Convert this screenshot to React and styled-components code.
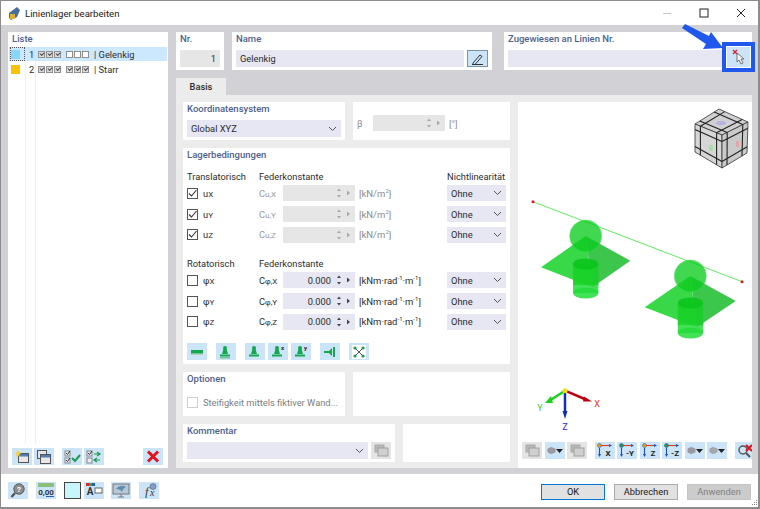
import React from "react"
import styled, { createGlobalStyle } from "styled-components"

const GlobalStyle = createGlobalStyle`
  html, body { margin: 0; padding: 0; background: #fff; }
  body { font-family: Roboto, "Open Sans", "Liberation Sans", sans-serif; font-size: 9.3px; color: #2c2c2c; }
  * { box-sizing: border-box; }
`

const Window = styled.div`
  position: relative;
  width: 760px;
  height: 509px;
  display: flex;
  flex-direction: column;
  background: #fff;
  border: solid #8c8c8c;
  border-width: 1px 2px 2px 1px;
  overflow: hidden;
`

const TitleBar = styled.div`
  height: 24px;
  flex: none;
  display: flex;
  align-items: center;
  padding-left: 6px;
  gap: 4px;
  font-size: 9.6px;
  color: #1a1a1a;
`

const WindowControls = styled.div`
  margin-left: auto;
  display: flex;
  align-items: center;
  gap: 27px;
  padding-right: 12px;
`

const Main = styled.div`
  flex: 1;
  display: flex;
  gap: 8px;
  min-height: 0;
  padding: 7px 6px 6px 7px;
  background: #d2d2d6;
`

const Panel = styled.div`
  background: #fff;
  padding: 0 4px;
  min-width: 0;
  width: ${(p) => (p.$w ? `${p.$w}px` : "auto")};
  height: ${(p) => (p.$h ? `${p.$h}px` : "auto")};
  flex: ${(p) => (p.$w || p.$fixed ? "none" : 1)};
  margin-left: ${(p) => p.$ml || 0}px;
`

const PanelTitle = styled.div`
  font-weight: 500;
  font-size: 9.5px;
  height: 18px;
  line-height: 14px;
  color: #4d5f8f;
  white-space: nowrap;
`

const ListPanel = styled.div`
  width: 160px;
  flex: none;
  background: #fff;
  display: flex;
  flex-direction: column;
`

const ListTitle = styled(PanelTitle)`
  padding-left: 4px;
  height: 15px;
`

const ListBody = styled.div`
  flex: 1;
  display: flex;
  flex-direction: column;
  gap: 1px;
  background:
    linear-gradient(#efeff1, #efeff1) 17px 0 / 1px 100% no-repeat,
    linear-gradient(#efeff1, #efeff1) 27px 0 / 1px 100% no-repeat;
`

const ListRow = styled.div`
  height: 14px;
  display: flex;
  align-items: center;
  background: ${(p) => (p.$selected ? "#cce8ff" : "transparent")};
  margin-left: 1px;
  margin-right: 1px;
`

const Swatch = styled.span`
  width: 9px;
  height: 9px;
  margin: 0 9px 0 2px;
  background: ${(p) => p.$color};
`

const FocusMark = styled.span`
  position: absolute;
  left: 9px;
  top: 46px;
  width: 15px;
  height: 14px;
  border: 1px dotted #555;
`

const RowNumber = styled.span`
  width: 9px;
`

const MiniGroup = styled.span`
  display: flex;
  gap: 1px;
  margin-right: 5px;
`

const MiniBox = styled.span`
  width: 7px;
  height: 7px;
  border: 1px solid #8f8f8f;
  background: ${(p) => (p.$on ? "#dcdcdc" : "#fff")};
  position: relative;
  &::after {
    content: "";
    display: ${(p) => (p.$on ? "block" : "none")};
    position: absolute;
    left: 1px;
    top: 0;
    width: 3px;
    height: 2px;
    border: solid #444;
    border-width: 0 0 1px 1px;
    transform: rotate(-45deg);
  }
`

const ListToolbar = styled.div`
  height: 25px;
  flex: none;
  display: flex;
  padding: 5px 4px 0;
  gap: 2px;
`

const IconButton = styled.div`
  width: ${(p) => p.$w || 20}px;
  height: ${(p) => p.$h || 17}px;
  flex: none;
  display: flex;
  align-items: center;
  justify-content: center;
  margin-left: ${(p) => p.$ml || 0}px;
  background: ${(p) => (p.$gray ? "#e4e4e4" : "#cce4f7")};
  border: ${(p) => (p.$framed ? "1px solid #7a93a8" : "none")};
`

const RightColumn = styled.div`
  flex: 1;
  min-width: 0;
  display: flex;
  flex-direction: column;
`

const TopRow = styled.div`
  height: 38px;
  flex: none;
  display: flex;
  gap: 8px;
  margin-bottom: 8px;
`

const FieldRow = styled.div`
  display: flex;
  gap: 3px;
`

const TextField = styled.div`
  flex: ${(p) => (p.$w ? "none" : 1)};
  width: ${(p) => (p.$w ? `${p.$w}px` : "auto")};
  height: 17px;
  line-height: 17px;
  padding: 0 4px;
  text-align: ${(p) => (p.$right ? "right" : "left")};
  background: ${(p) => (p.$gray ? "#e6e6e6" : "#e6e7f2")};
`

const Tab = styled.div`
  width: 50px;
  height: 17px;
  flex: none;
  background: #ececec;
  text-align: center;
  line-height: 18px;
  font-weight: 500;
`

const TabBody = styled.div`
  flex: 1;
  min-height: 0;
  display: grid;
  grid-template-columns: 327px 234px;
  gap: 8px;
  background: #ececec;
  padding: 7px 0 0 7px;
`

const FormColumn = styled.div`
  display: flex;
  flex-direction: column;
  gap: 8px;
`

const PanelRow = styled.div`
  display: flex;
  gap: 8px;
`

const Select = styled.div`
  height: ${(p) => p.$h || 17}px;
  flex: ${(p) => (p.$grow ? 1 : "none")};
  display: flex;
  align-items: center;
  justify-content: space-between;
  padding: 0 4px;
  background: #e6e7f2;
`

const BetaRow = styled.div`
  display: flex;
  align-items: center;
  height: 16px;
  margin-top: 13px;
  color: #8a8a8a;
`

const BetaSymbol = styled.span`
  width: 16px;
`

const SpinField = styled.div`
  height: 16px;
  width: 72px;
  flex: none;
  display: flex;
  align-items: center;
  justify-content: flex-end;
  background: ${(p) => (p.$off ? "#e6e6e6" : "#e6e7f2")};
  padding-right: 3px;
  gap: 5px;
  color: #2c2c2c;
`

const Unit = styled.span`
  font-size: 9.5px;
  white-space: nowrap;
  padding-left: ${(p) => p.$pl || 0}px;
  color: ${(p) => (p.$off ? "#8a8a8a" : "#2c2c2c")};
  sup { font-size: 6px; line-height: 0; }
`

const SupportGrid = styled.div`
  display: grid;
  grid-template-columns: 72px 24px 72px 92px 59px;
  grid-template-rows: 14px repeat(3, 20.7px);
  align-items: center;
  margin-top: ${(p) => p.$mt || 0}px;
`

const ColumnLabel = styled.div`
  white-space: nowrap;
  grid-column: ${(p) => p.$col};
`

const CheckCell = styled.div`
  display: flex;
  align-items: center;
  gap: 5px;
`

const Checkbox = styled.span`
  width: 11px;
  height: 11px;
  flex: none;
  display: flex;
  align-items: center;
  justify-content: center;
  background: #fff;
  border: 1px solid ${(p) => (p.$off ? "#cfcfcf" : "#555")};
`

const Symbol = styled.span`
  small { font-size: 8px; }
  color: ${(p) => (p.$off ? "#9a9a9a" : "#2c2c2c")};
`

const UnitCell = styled.div`
  padding-left: 4px;
`

const SupportButtons = styled.div`
  display: flex;
  gap: 3px;
  margin-top: 11px;
`

const OptionRow = styled.div`
  display: flex;
  align-items: center;
  gap: 5px;
  height: 12px;
  margin-top: 6px;
  color: #7d7d7d;
  white-space: nowrap;
`

const Viewer = styled.div`
  background: #fff;
  display: flex;
  flex-direction: column;
  min-height: 0;
  overflow: hidden;
`

const ViewerCanvas = styled.svg`
  display: block;
  width: 234px;
  height: 340px;
  flex: none;
`

const ViewerToolbar = styled.div`
  display: flex;
  gap: 2.5px;
  padding-left: 4px;
  overflow: hidden;
`

const Footer = styled.div`
  height: 33px;
  flex: none;
  display: flex;
  align-items: flex-start;
  padding: 8px 7px 0 7px;
`

const FooterIcons = styled.div`
  display: flex;
  gap: 8px;
`

const ColorSwatch = styled.div`
  width: 17px;
  height: 17px;
  margin-right: -5px;
  background: #c8f4fb;
  border: 1px solid #444;
`

const DialogButtons = styled.div`
  margin-left: auto;
  display: flex;
  gap: 9px;
  margin-top: 2px;
`

const DialogButton = styled.div`
  width: 64px;
  height: 16px;
  line-height: 14px;
  text-align: center;
  background: ${(p) => (p.$disabled ? "#cccccc" : "#e1e1e1")};
  color: ${(p) => (p.$disabled ? "#808080" : "#1a1a1a")};
  border: 1px solid ${(p) => (p.$primary ? "#0078d7" : p.$disabled ? "#c4c4c4" : "#adadad")};
`

const HighlightBox = styled.div`
  position: absolute;
  left: 721px;
  top: 41px;
  width: 33px;
  height: 30px;
  border: 4px solid #2058ee;
  background: #fff;
  padding: 1px;
`

const HighlightInner = styled.div`
  height: 100%;
  display: flex;
  align-items: center;
  justify-content: center;
  background: #cce4f7;
`

const ArrowOverlay = styled.svg`
  position: absolute;
  left: 679px;
  top: 22px;
`

const ResizeGrip = styled.svg`
  position: absolute;
  right: 0;
  bottom: 0;
`

const Chevron = ({ color = "#555" }) => (
  <svg width="9" height="6" viewBox="0 0 9 6">
    <path d="M1 1l3.5 3.5L8 1" fill="none" stroke={color} strokeWidth="1" />
  </svg>
)

const Check = () => (
  <svg width="9" height="9" viewBox="0 0 9 9">
    <path d="M1 4.5l2.5 2.5L8.5 1" fill="none" stroke="#333" strokeWidth="1.1" />
  </svg>
)

const Spinner = ({ off }) => {
  const c = off ? "#a8a8a8" : "#444"
  return (
    <svg width="16" height="12" viewBox="0 0 16 12">
      <path d="M1 4l2-2.5L5 4zM1 8l2 2.5L5 8z" fill={c} />
      <path d="M11 3.500l3 2.500-3 2.500z" fill={c} />
    </svg>
  )
}

const Tri = () => (
  <svg width="7" height="4" viewBox="0 0 7 4">
    <path d="M0 0h7L3.500 4z" fill="#222" />
  </svg>
)

// small support symbol on the green buttons
const SupportIcon = ({ kind }) => {
  const g = "#12a84e"
  if (kind === "bar") {
    return (
      <svg width="14" height="10" viewBox="0 0 14 10">
        <rect x="1" y="3" width="12" height="3" fill={g} />
        <rect x="1" y="6" width="12" height="1.500" fill="#7fbf8f" />
      </svg>
    )
  }
  if (kind === "wall") {
    return (
      <svg width="14" height="12" viewBox="0 0 14 12">
        <path d="M1 5h5l3-3v8L6 7H1z" fill={g} />
        <rect x="10" y="1" width="2" height="10" fill={g} />
      </svg>
    )
  }
  return (
    <svg width="16" height="14" viewBox="0 0 16 14">
      <circle cx="7" cy="3" r="2" fill={g} />
      <path d="M5.500 4h3l1.500 5h-6z" fill={g} />
      <rect x="2" y="9.500" width="10" height="2" fill={g} />
      {kind === "hinge" && <rect x="2" y="12" width="10" height="1.500" fill="#7fbf8f" />}
      {kind === "x" && <text x="11" y="5" fontSize="6" fontWeight="700" fill="#222">x</text>}
      {kind === "y" && <text x="11" y="5" fontSize="6" fontWeight="700" fill="#222">y</text>}
    </svg>
  )
}

const FitIcon = () => (
  <svg width="14" height="14" viewBox="0 0 14 14">
    <rect width="14" height="14" fill="#fff" />
    <path d="M3 3l8 8M11 3l-8 8" stroke="#555" strokeWidth="1" />
    <g fill="#1c9a50">
      <circle cx="3" cy="3" r="1.600" />
      <circle cx="11" cy="3" r="1.600" />
      <circle cx="3" cy="11" r="1.600" />
      <circle cx="11" cy="11" r="1.600" />
    </g>
  </svg>
)

const WindowIcon = ({ star, double }) => (
  <svg width="16" height="14" viewBox="0 0 16 14">
    {double && <rect x="1.500" y="0.500" width="9" height="8" fill="#dfe6ee" stroke="#555" />}
    <rect x="4.500" y={double ? 4.500 : 3.500} width="10" height="9" fill="#e8e8e8" stroke="#555" />
    <rect x="5" y={double ? 5 : 4} width="9" height="2.500" fill="#4f7fb5" />
    {star && <path d="M4 0l1 2.300L7.500 3 5.300 4.300 5.500 7 4 5.400 2.200 7l.4-2.700L.5 3l2.500-.7z" fill="#f6d32d" />}
  </svg>
)

const CheckListIcon = ({ arrows }) => (
  <svg width="17" height="14" viewBox="0 0 17 14">
    <rect x="1" y="1" width="5" height="5" fill="#e8eef4" stroke="#888" />
    <rect x="1" y="8" width="5" height="5" fill="#e8eef4" stroke="#888" />
    <path d="M2 3l1.500 1.500L6 1" fill="none" stroke="#333" />
    {!arrows && <path d="M2 10l1.500 1.500L6 8" fill="none" stroke="#333" />}
    {arrows ? (
      <path d="M8 4h6M8 10h6M11 2l3 2-3 2M11 8l-3 2 3 2" fill="none" stroke="#1c9a50" strokeWidth="1.200" />
    ) : (
      <path d="M8 8l3 3 5-6" fill="none" stroke="#1c9a50" strokeWidth="2" />
    )}
  </svg>
)

const RedCross = () => (
  <svg width="14" height="13" viewBox="0 0 14 13">
    <path d="M2 1.500l10 10M12 1.500l-10 10" stroke="#e8101c" strokeWidth="3" />
  </svg>
)

const PickIcon = () => (
  <svg width="18" height="16" viewBox="0 0 18 16">
    <path d="M3 1l4 4M7 1L3 5" stroke="#e0182c" strokeWidth="1.300" />
    <path d="M7 4v9l2-2 2 4 2-1-2-4h3z" fill="#f4f4f4" stroke="#6a6a6a" strokeWidth="0.900" />
  </svg>
)

const CopyIcon = () => (
  <svg width="15" height="13" viewBox="0 0 15 13">
    <rect x="1" y="1" width="9" height="7" fill="#b8b8b8" stroke="#a8a8a8" />
    <rect x="4" y="4" width="10" height="8" fill="#cfcfcf" stroke="#a0a0a0" />
  </svg>
)

const HelpIcon = () => (
  <svg width="16" height="15" viewBox="0 0 16 15">
    <circle cx="9" cy="6" r="5.200" fill="#8c8c8c" stroke="#5a5a5a" />
    <path d="M5 10l-3.500 4" stroke="#555" strokeWidth="2.400" />
    <text x="9" y="9" fontSize="8" fontWeight="700" textAnchor="middle" fill="#fff">?</text>
  </svg>
)

const UnitsIcon = () => (
  <svg width="18" height="15" viewBox="0 0 18 15">
    <rect x="1" y="0" width="16" height="4" fill="#8cbf7c" />
    <text x="9" y="11.500" fontSize="8" fontWeight="700" textAnchor="middle" fill="#333">0,00</text>
    <path d="M9 13.500h8" stroke="#2a5fb0" />
  </svg>
)

const NumberingIcon = () => (
  <svg width="18" height="15" viewBox="0 0 18 15">
    <rect x="1" y="0" width="3" height="3" fill="#e0282c" />
    <rect x="4" y="0" width="3" height="3" fill="#2aa84a" />
    <rect x="7" y="0" width="3" height="3" fill="#2a5fb0" />
    <text x="5" y="12" fontSize="10" fontWeight="700" textAnchor="middle" fill="#333">A</text>
    <rect x="10" y="5" width="7" height="5" fill="#fff" stroke="#666" />
  </svg>
)

const MonitorIcon = () => (
  <svg width="18" height="15" viewBox="0 0 18 15">
    <rect x="1" y="1" width="16" height="10" fill="#b8c8d8" stroke="#777" />
    <path d="M4 6c3-4 7-4 10-2-2 1-3 2-4 5-1-2-3-3-6-3z" fill="#5f8fb0" />
    <path d="M6 14h6M9 11v3" stroke="#777" />
  </svg>
)

const FormulaIcon = () => (
  <svg width="18" height="15" viewBox="0 0 18 15">
    <text x="5" y="13" fontSize="12" fontStyle="italic" fontFamily="Liberation Serif, serif" fill="#333">f</text>
    <text x="10" y="13" fontSize="10" fontStyle="italic" fontFamily="Liberation Serif, serif" fill="#333">x</text>
    <circle cx="13" cy="3.500" r="3" fill="#7f9fd0" stroke="#556" strokeWidth="0.600" />
  </svg>
)

const AxisIcon = ({ label, swap }) => (
  <svg width="18" height="15" viewBox="0 0 18 15">
    <circle cx="3.500" cy="2.500" r="2" fill={swap ? "#1c9a50" : "#e8a020"} stroke="#2a5fb0" strokeWidth="0.600" />
    <path d="M5 2.500h10" stroke="#d2401c" strokeWidth="1.100" />
    <path d="M3.500 5v8" stroke="#1f4fc0" strokeWidth="1.100" />
    <path d="M2 11l1.500 3L5 11zM13 1l3 1.500-3 1.500z" fill="#1f4fc0" />
    <text x="12" y="13" fontSize="8" fontWeight="700" textAnchor="middle" fill="#222">{label}</text>
  </svg>
)

const GrayCube = ({ dim }) => (
  <svg width="9" height="9" viewBox="0 0 11 10">
    <path d="M1 3l4-2 5 2v4l-5 2-4-2z" fill={dim ? "#a8a8ac" : "#9a9aa0"} stroke="#8a8a90" strokeWidth="0.500" />
  </svg>
)

const ViewCube = () => {
  const faces = [
    [[719, 109], [748, 122], [722, 135], [695, 124]],
    [[695, 124], [722, 135], [722, 168], [695, 152]],
    [[722, 135], [748, 122], [747, 153], [722, 168]],
  ]
  const lerp = (a, b, t) => [a[0] + (b[0] - a[0]) * t, a[1] + (b[1] - a[1]) * t]
  const lines = []
  faces.forEach(([a, b, c, d]) => {
    ;[0.2, 0.8].forEach((t) => {
      lines.push([lerp(a, b, t), lerp(d, c, t)])
      lines.push([lerp(a, d, t), lerp(b, c, t)])
    })
  })
  return (
    <g>
      {faces.map((f, i) => (
        <polygon key={i} points={f.map((p) => p.join(",")).join(" ")} fill={["#d0d0d2", "#d6d6d6", "#cacaca"][i]} stroke="#333" strokeWidth="0.800" />
      ))}
      {lines.map(([p, q], i) => (
        <line key={i} x1={p[0]} y1={p[1]} x2={q[0]} y2={q[1]} stroke="#222" strokeWidth="1.100" />
      ))}
      <ellipse cx="721" cy="123" rx="5" ry="2" fill="#b4b4dc" />
      <rect x="709" y="145" width="4" height="6" fill="#a8dca8" />
      <rect x="736" y="141" width="3" height="6" fill="#e0a8a8" />
    </g>
  )
}

const Support = ({ sphere, plate, cyl }) => (
  <g>
    <ellipse cx={cyl.cx} cy={cyl.bottom} rx={cyl.rx} ry="5.500" fill="#22dc38" opacity="0.85" />
    <rect x={cyl.cx - cyl.rx} y={cyl.top} width={cyl.rx * 2} height={cyl.bottom - cyl.top} fill="#22dc38" opacity="0.85" />
    <polygon points={plate.left} fill="#38d848" />
    <polygon points={plate.right} fill="#3cc64c" />
    <rect x={cyl.cx - cyl.rx} y={cyl.top} width={cyl.rx * 2} height={plate.hidden - cyl.top} fill="#10d020" opacity="0.7" />
    <ellipse cx={cyl.cx} cy={cyl.top} rx={cyl.rx} ry="5.500" fill="#0cc41c" opacity="0.9" />
    <circle cx={sphere[0]} cy={sphere[1]} r="16" fill="#0ccc20" opacity="0.78" stroke="#30e848" strokeWidth="0.600" />
  </g>
)

const Scene = () => (
  <ViewerCanvas viewBox="518 102 234 340">
    <ViewCube />
    <line x1="533" y1="201.700" x2="742" y2="281.700" stroke="#60f060" strokeWidth="1" />
    <circle cx="533" cy="201.700" r="1.500" fill="#f01020" />
    <circle cx="742" cy="281.700" r="1.500" fill="#f01020" />
    <Support
      sphere={[585.7, 236]}
      plate={{ left: "541,267.300 585.700,236 592.300,287.300", right: "585.700,236 630.300,260.700 592.300,287.300", hidden: 285 }}
      cyl={{ cx: 585.7, rx: 12.700, top: 264, bottom: 293 }}
    />
    <Support
      sphere={[690.3, 276]}
      plate={{ left: "644.700,307.300 690.300,276 696.700,327.300", right: "690.300,276 735.700,301 696.700,327.300", hidden: 325 }}
      cyl={{ cx: 690.5, rx: 12.700, top: 303, bottom: 333 }}
    />
    <line x1="565" y1="390.700" x2="587" y2="400" stroke="#c00010" strokeWidth="2.500" />
    <path d="M584 396.500l8 5-9 0z" fill="#c00010" />
    <line x1="565" y1="390.700" x2="549" y2="401" stroke="#20d020" strokeWidth="2.500" />
    <path d="M551 396l-6 7 8 0z" fill="#20d020" />
    <line x1="565" y1="390.700" x2="565" y2="413" stroke="#1030b0" strokeWidth="2.500" />
    <path d="M562.500 411h5l-2.500 8z" fill="#1030b0" />
    <circle cx="565" cy="390.700" r="2.500" fill="#f0e010" />
    <text x="597" y="407" fontSize="9" fill="#f02828" textAnchor="middle">X</text>
    <text x="540" y="411" fontSize="9" fill="#30d030" textAnchor="middle">Y</text>
    <text x="565" y="430" fontSize="9" fill="#2030f0" textAnchor="middle">Z</text>
  </ViewerCanvas>
)

const translations = [
  { sym: "u", sub: "X", c: "X" },
  { sym: "u", sub: "Y", c: "Y" },
  { sym: "u", sub: "Z", c: "Z" },
]

const rotations = [
  { sym: "φ", sub: "X", c: "X" },
  { sym: "φ", sub: "Y", c: "Y" },
  { sym: "φ", sub: "Z", c: "Z" },
]

const Mini = ({ on }) => (
  <MiniGroup>
    <MiniBox $on={on} />
    <MiniBox $on={on} />
    <MiniBox $on={on} />
  </MiniGroup>
)

const App = () => (
  <>
    <GlobalStyle />
    <Window>
      <TitleBar>
        <svg width="14" height="15" viewBox="0 0 14 15">
          <path d="M2 7l8-6 3 3-3 7-6 3-2-2z" fill="#4b6d9a" />
          <rect x="3" y="8" width="5" height="5" fill="#e0b030" />
        </svg>
        Linienlager bearbeiten
        <WindowControls>
          <svg width="10" height="10" viewBox="0 0 10 10">
            <path d="M1 5.500h8" stroke="#c8c8c8" />
          </svg>
          <svg width="10" height="10" viewBox="0 0 10 10">
            <rect x="1" y="1" width="8" height="8" fill="none" stroke="#222" />
          </svg>
          <svg width="10" height="10" viewBox="0 0 10 10">
            <path d="M1 1l8 8M9 1l-8 8" stroke="#222" />
          </svg>
        </WindowControls>
      </TitleBar>

      <Main>
        <ListPanel>
          <ListTitle>Liste</ListTitle>
          <ListBody>
            <ListRow $selected>
              <Swatch $color="#87d7fa" />
              <RowNumber>1</RowNumber>
              <Mini on />
              <Mini />
              | Gelenkig
            </ListRow>
            <ListRow>
              <Swatch $color="#ffc000" />
              <RowNumber>2</RowNumber>
              <Mini on />
              <Mini on />
              | Starr
            </ListRow>
          </ListBody>
          <ListToolbar>
            <IconButton><WindowIcon star /></IconButton>
            <IconButton><WindowIcon double /></IconButton>
            <IconButton $ml={6}><CheckListIcon /></IconButton>
            <IconButton><CheckListIcon arrows /></IconButton>
            <IconButton $ml={37}><RedCross /></IconButton>
          </ListToolbar>
        </ListPanel>

        <RightColumn>
          <TopRow>
            <Panel $w={48}>
              <PanelTitle>Nr.</PanelTitle>
              <TextField $gray $right>1</TextField>
            </Panel>
            <Panel $w={260}>
              <PanelTitle>Name</PanelTitle>
              <FieldRow>
                <TextField>Gelenkig</TextField>
                <IconButton $w={21} $framed>
                  <svg width="13" height="12" viewBox="0 0 13 12">
                    <path d="M2 10l7-8 2 1.500-7 8H2zM1 11.500h11" fill="none" stroke="#333" />
                  </svg>
                </IconButton>
              </FieldRow>
            </Panel>
            <Panel $ml={4}>
              <PanelTitle>Zugewiesen an Linien Nr.</PanelTitle>
              <TextField $w={214} />
            </Panel>
          </TopRow>

          <Tab>Basis</Tab>
          <TabBody>
            <FormColumn>
              <PanelRow>
                <Panel $w={162} $h={38}>
                  <PanelTitle>Koordinatensystem</PanelTitle>
                  <Select>
                    Global XYZ
                    <Chevron />
                  </Select>
                </Panel>
                <Panel $h={38}>
                  <BetaRow>
                    <BetaSymbol>β</BetaSymbol>
                    <SpinField $off><Spinner off /></SpinField>
                    <Unit $off $pl={4}>[°]</Unit>
                  </BetaRow>
                </Panel>
              </PanelRow>

              <Panel $h={216} $fixed>
                <PanelTitle>Lagerbedingungen</PanelTitle>
                <SupportGrid $mt={3}>
                  <ColumnLabel $col="1">Translatorisch</ColumnLabel>
                  <ColumnLabel $col="2 / span 3">Federkonstante</ColumnLabel>
                  <ColumnLabel $col="5">Nichtlinearität</ColumnLabel>
                  {translations.map((t) => (
                    <React.Fragment key={t.sub}>
                      <CheckCell>
                        <Checkbox><Check /></Checkbox>
                        <Symbol>{t.sym}<small>{t.sub}</small></Symbol>
                      </CheckCell>
                      <Symbol $off>C<small>u,{t.c}</small></Symbol>
                      <SpinField $off><Spinner off /></SpinField>
                      <UnitCell><Unit $off>[kN/m<sup>2</sup>]</Unit></UnitCell>
                      <Select $h={16}>Ohne<Chevron /></Select>
                    </React.Fragment>
                  ))}
                </SupportGrid>
                <SupportGrid $mt={11}>
                  <ColumnLabel $col="1">Rotatorisch</ColumnLabel>
                  <ColumnLabel $col="2 / span 4">Federkonstante</ColumnLabel>
                  {rotations.map((t) => (
                    <React.Fragment key={t.sub}>
                      <CheckCell>
                        <Checkbox />
                        <Symbol>{t.sym}<small>{t.sub}</small></Symbol>
                      </CheckCell>
                      <Symbol>C<small>φ,{t.c}</small></Symbol>
                      <SpinField>0.000<Spinner /></SpinField>
                      <UnitCell>
                        <Unit>[kNm·rad<sup>-1</sup>·m<sup>-1</sup>]</Unit>
                      </UnitCell>
                      <Select $h={16}>Ohne<Chevron /></Select>
                    </React.Fragment>
                  ))}
                </SupportGrid>
                <SupportButtons>
                  <IconButton><SupportIcon kind="bar" /></IconButton>
                  <IconButton $ml={6}><SupportIcon kind="hinge" /></IconButton>
                  <IconButton $ml={6}><SupportIcon kind="plain" /></IconButton>
                  <IconButton><SupportIcon kind="x" /></IconButton>
                  <IconButton><SupportIcon kind="y" /></IconButton>
                  <IconButton $ml={6}><SupportIcon kind="wall" /></IconButton>
                  <IconButton $ml={6}><FitIcon /></IconButton>
                </SupportButtons>
              </Panel>

              <PanelRow>
                <Panel $w={162} $h={44}>
                  <PanelTitle>Optionen</PanelTitle>
                  <OptionRow>
                    <Checkbox $off />
                    Steifigkeit mittels fiktiver Wand...
                  </OptionRow>
                </Panel>
                <Panel $h={44} />
              </PanelRow>

              <PanelRow>
                <Panel $w={212} $h={38}>
                  <PanelTitle>Kommentar</PanelTitle>
                  <FieldRow>
                    <Select $grow>
                      <span />
                      <Chevron />
                    </Select>
                    <IconButton $gray><CopyIcon /></IconButton>
                  </FieldRow>
                </Panel>
                <Panel $h={38} />
              </PanelRow>
            </FormColumn>

            <Viewer>
              <Scene />
              <ViewerToolbar>
                <IconButton $gray><CopyIcon /></IconButton>
                <IconButton><GrayCube /><Tri /></IconButton>
                <IconButton $gray><CopyIcon /></IconButton>
                <IconButton $ml={5}><AxisIcon label="X" /></IconButton>
                <IconButton><AxisIcon label="-Y" swap /></IconButton>
                <IconButton><AxisIcon label="Z" /></IconButton>
                <IconButton><AxisIcon label="-Z" swap /></IconButton>
                <IconButton><GrayCube /><Tri /></IconButton>
                <IconButton><GrayCube dim /><Tri /></IconButton>
                <IconButton $ml={5}>
                  <svg width="16" height="14" viewBox="0 0 16 14">
                    <circle cx="6" cy="6" r="4" fill="none" stroke="#555" strokeWidth="1.500" />
                    <path d="M9 9l4 4" stroke="#555" strokeWidth="2" />
                    <path d="M9 1l6 6M15 1L9 7" stroke="#e8101c" strokeWidth="2" />
                  </svg>
                </IconButton>
              </ViewerToolbar>
            </Viewer>
          </TabBody>
        </RightColumn>
      </Main>

      <Footer>
        <FooterIcons>
          <IconButton><HelpIcon /></IconButton>
          <IconButton><UnitsIcon /></IconButton>
          <ColorSwatch />
          <IconButton><NumberingIcon /></IconButton>
          <IconButton $ml={-1}><MonitorIcon /></IconButton>
          <IconButton><FormulaIcon /></IconButton>
        </FooterIcons>
        <DialogButtons>
          <DialogButton $primary>OK</DialogButton>
          <DialogButton>Abbrechen</DialogButton>
          <DialogButton $disabled>Anwenden</DialogButton>
        </DialogButtons>
      </Footer>

      <FocusMark />
      <ArrowOverlay width="46" height="30" viewBox="679 22 46 30">
        <path d="M681 27l3-4 24 12 2-4 12 16-20 1 3-5z" fill="#2058ee" />
      </ArrowOverlay>
      <HighlightBox>
        <HighlightInner><PickIcon /></HighlightInner>
      </HighlightBox>
      <ResizeGrip width="8" height="8" viewBox="0 0 8 8">
        <path d="M6 1h1v1H6zM4 3h1v1H4zM6 3h1v1H6zM2 5h1v1H2zM4 5h1v1H4zM6 5h1v1H6z" fill="#888" />
      </ResizeGrip>
    </Window>
  </>
)

export default App
